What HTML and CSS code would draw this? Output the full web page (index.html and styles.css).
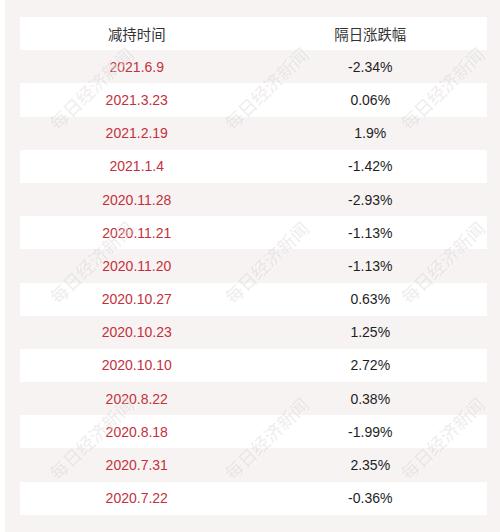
FILE: index.html
```html
<!DOCTYPE html>
<html lang="zh">
<head>
<meta charset="utf-8">
<title>减持时间</title>
<link rel="stylesheet" href="styles.css">
</head>
<body>
<div class="page">
  <div class="panel">
    <div class="table">
      <div class="row head"><div class="cell">减持时间</div><div class="cell">隔日涨跌幅</div></div>
      <div class="row"><div class="cell date">2021.6.9</div><div class="cell val">-2.34%</div></div>
      <div class="row"><div class="cell date">2021.3.23</div><div class="cell val">0.06%</div></div>
      <div class="row"><div class="cell date">2021.2.19</div><div class="cell val">1.9%</div></div>
      <div class="row"><div class="cell date">2021.1.4</div><div class="cell val">-1.42%</div></div>
      <div class="row"><div class="cell date">2020.11.28</div><div class="cell val">-2.93%</div></div>
      <div class="row"><div class="cell date">2020.11.21</div><div class="cell val">-1.13%</div></div>
      <div class="row"><div class="cell date">2020.11.20</div><div class="cell val">-1.13%</div></div>
      <div class="row"><div class="cell date">2020.10.27</div><div class="cell val">0.63%</div></div>
      <div class="row"><div class="cell date">2020.10.23</div><div class="cell val">1.25%</div></div>
      <div class="row"><div class="cell date">2020.10.10</div><div class="cell val">2.72%</div></div>
      <div class="row"><div class="cell date">2020.8.22</div><div class="cell val">0.38%</div></div>
      <div class="row"><div class="cell date">2020.8.18</div><div class="cell val">-1.99%</div></div>
      <div class="row"><div class="cell date">2020.7.31</div><div class="cell val">2.35%</div></div>
      <div class="row"><div class="cell date">2020.7.22</div><div class="cell val">-0.36%</div></div>
    </div>
  </div>
  <div class="marks">
    <span class="mark c1 r1">每日经济新闻</span>
    <span class="mark c2 r1">每日经济新闻</span>
    <span class="mark c3 r1">每日经济新闻</span>
    <span class="mark c1 r2">每日经济新闻</span>
    <span class="mark c2 r2">每日经济新闻</span>
    <span class="mark c3 r2">每日经济新闻</span>
    <span class="mark c1 r3">每日经济新闻</span>
    <span class="mark c2 r3">每日经济新闻</span>
    <span class="mark c3 r3">每日经济新闻</span>
  </div>
</div>
</body>
</html>
```
FILE: styles.css
```css
html, body {
  margin: 0;
  padding: 0;
  background: #ffffff;
}
.page {
  position: relative;
  width: 500px;
  height: 532px;
  overflow: hidden;
  padding-left: 5px;
  box-sizing: border-box;
  font-family: "Liberation Sans", Arial, "Noto Sans CJK SC", sans-serif;
}
.panel {
  height: 532px;
  background: #f7f3f3;
  padding: 17px 13px 17px 15px;
  box-sizing: border-box;
}
.table {
  display: flex;
  flex-direction: column;
}
.row {
  display: grid;
  grid-template-columns: 1fr 1fr;
  height: 33.2px;
  align-items: center;
}
.row:nth-child(odd) {
  background: #ffffff;
}
.cell {
  text-align: center;
  font-size: 14px;
  line-height: 16px;
}
.head .cell {
  color: #333333;
  font-family: "Noto Sans CJK SC", sans-serif;
  font-size: 14.4px;
}
.date {
  color: #c5303c;
}
.val {
  color: #1e1e1e;
}
.marks {
  position: absolute;
  inset: 0;
  pointer-events: none;
}
.mark {
  position: absolute;
  transform: translate(-50%, -50%) rotate(-44deg);
  font-family: "Noto Sans CJK SC", sans-serif;
  font-weight: 500;
  font-size: 18px;
  white-space: nowrap;
  color: rgba(160, 150, 150, 0.16);
  text-shadow: 1px 1px 0 rgba(255, 255, 255, 0.4);
}
.c1 { left: 91px; }
.c2 { left: 266px; }
.c3 { left: 442px; }
.r1 { top: 88px; }
.r2 { top: 262px; }
.r3 { top: 438px; }
```
